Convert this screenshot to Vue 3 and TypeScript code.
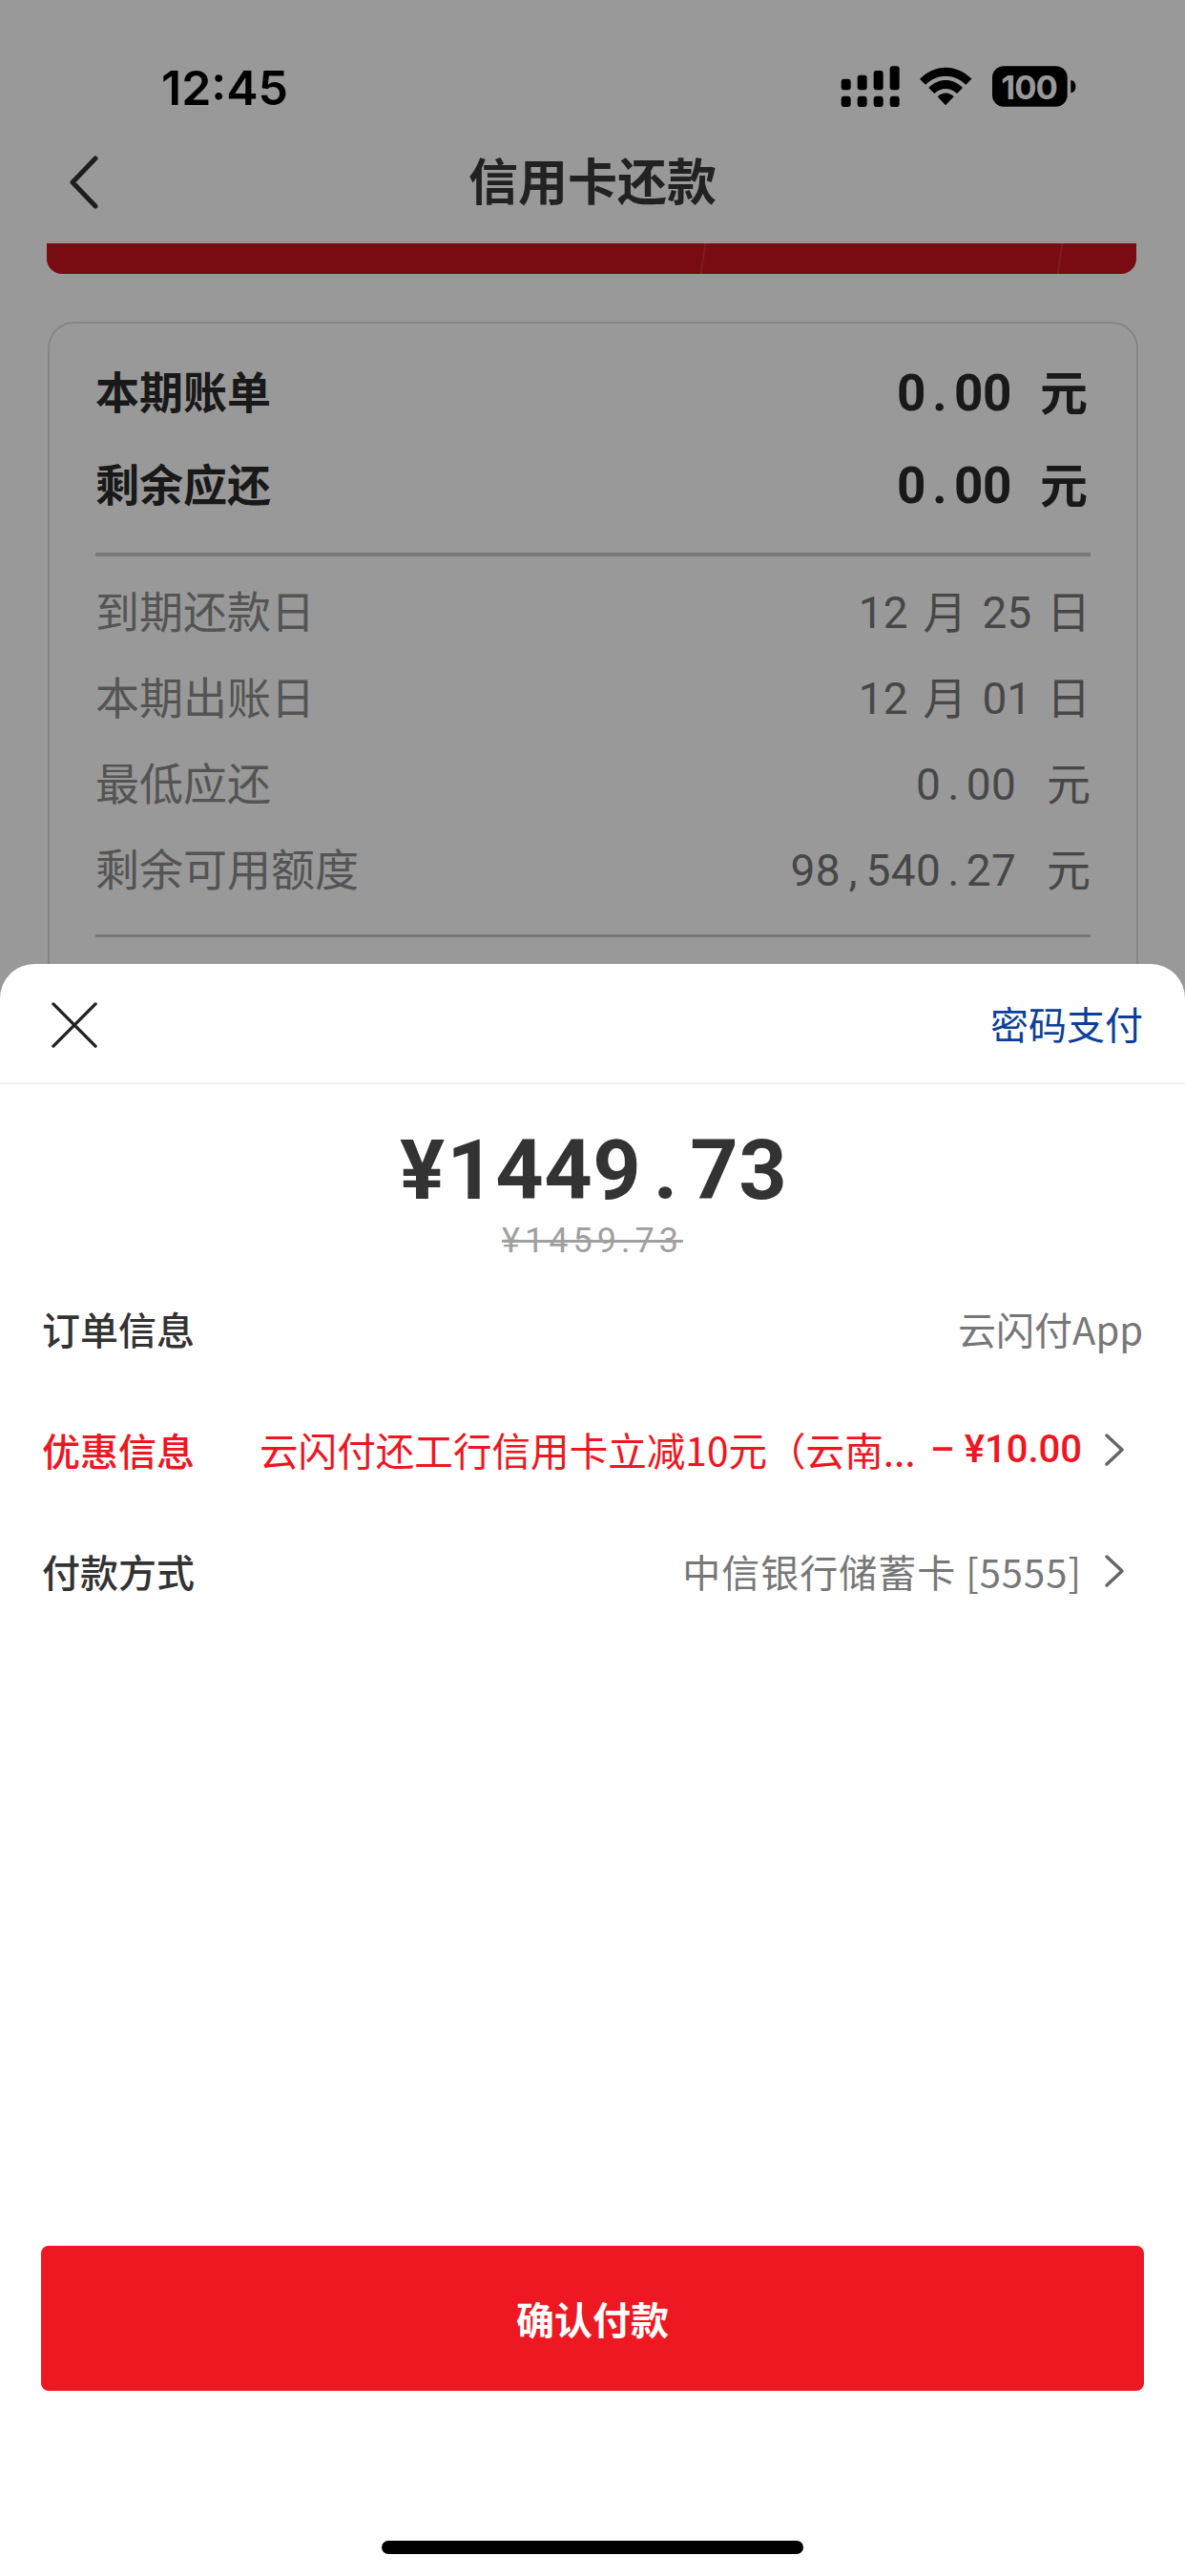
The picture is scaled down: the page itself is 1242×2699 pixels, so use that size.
<script setup lang="ts">
const billRows = [
  { label: '本期账单', num: '0.00', unit: '元' },
  { label: '剩余应还', num: '0.00', unit: '元' }
];

const detailRows = [
  { label: '到期还款日', value: '12 月 25 日', fixed: false },
  { label: '本期出账日', value: '12 月 01 日', fixed: false },
  { label: '最低应还', value: '0.00', unit: '元', fixed: true },
  { label: '剩余可用额度', value: '98,540.27', unit: '元', fixed: true }
];

// the numbers in the reference are monospaced, each char gets its own cell
const chars = (s: string) => s.split('');
</script>

<template>
  <div class="page">
    <div class="status-bar">
      <span class="time">12:45</span>
      <svg class="status-icons" viewBox="0 0 960 270" aria-hidden="true">
        <rect x="125" y="98" width="30" height="35" rx="9" />
        <rect x="176" y="86" width="30" height="47" rx="9" />
        <rect x="227" y="72" width="30" height="61" rx="9" />
        <rect x="278" y="58" width="30" height="75" rx="9" />
        <rect x="125" y="152" width="30" height="34" rx="10" />
        <rect x="176" y="152" width="30" height="34" rx="10" />
        <rect x="227" y="152" width="30" height="34" rx="10" />
        <rect x="278" y="152" width="30" height="34" rx="10" />
        <path d="M372 98C420 50 488 50 535 98L517 116C480 80 427 80 390 116Z" />
        <path d="M400 126C432 94 475 94 507 126L489 144C467 124 440 124 418 144Z" />
        <path d="M428 154C444 139 463 139 479 154L453 181Z" />
        <rect x="600" y="58" width="236" height="127" rx="36" />
        <path d="M847 102C858 104 862 112 862 122C862 132 858 140 847 142Z" />
        <text class="battery-text" x="716" y="162" text-anchor="middle">100</text>
      </svg>
    </div>

    <div class="nav-bar">
      <svg class="back" viewBox="0 0 34 56" aria-hidden="true">
        <path d="M29 3 5 28l24 25" />
      </svg>
      <span class="nav-title">信用卡还款</span>
    </div>

    <div class="red-band">
      <i class="streak streak-a"></i>
      <i class="streak streak-b"></i>
    </div>

    <div class="card">
      <div class="bill-rows">
        <div v-for="row in billRows" :key="row.label" class="bill-row">
          <span>{{ row.label }}</span>
          <span class="bill-value">
            <span class="cells"><span v-for="(c, i) in chars(row.num)" :key="i" class="cell">{{ c }}</span></span>
            <span>{{ row.unit }}</span>
          </span>
        </div>
      </div>
      <div class="divider"></div>
      <div class="detail-rows">
        <div v-for="row in detailRows" :key="row.label" class="detail-row">
          <span>{{ row.label }}</span>
          <span v-if="row.fixed" class="detail-value">
            <span class="cells"><span v-for="(c, i) in chars(row.value)" :key="i" class="cell">{{ c }}</span></span>
            <span>{{ row.unit }}</span>
          </span>
          <span v-else class="detail-value date">{{ row.value }}</span>
        </div>
      </div>
      <div class="divider thin"></div>
    </div>

    <div class="scrim"></div>

    <div class="sheet">
      <div class="sheet-head">
        <svg class="close" viewBox="0 0 50 50" aria-hidden="true">
          <path d="M2 2 48 48M48 2 2 48" />
        </svg>
        <span class="pwd-pay">密码支付</span>
      </div>

      <div class="amount"><span v-for="(c, i) in chars('¥1449.73')" :key="i" class="amount-cell">{{ c }}</span></div>
      <div class="old-amount">¥1459.73</div>

      <div class="info-rows">
        <div class="info-row">
          <span class="info-label">订单信息</span>
          <span class="info-value">云闪付App</span>
        </div>
        <div class="info-row promo">
          <span class="info-label">优惠信息</span>
          <span class="promo-text">云闪付还工行信用卡立减10元（云南...</span>
          <span class="promo-amount">– ¥10.00</span>
          <svg class="chevron" viewBox="0 0 22 36" aria-hidden="true"><path d="M3 3 19 18 3 33" /></svg>
        </div>
        <div class="info-row">
          <span class="info-label">付款方式</span>
          <span class="info-value pay-card">中信银行储蓄卡 [5555]</span>
          <svg class="chevron" viewBox="0 0 22 36" aria-hidden="true"><path d="M3 3 19 18 3 33" /></svg>
        </div>
      </div>

      <button class="confirm" type="button">确认付款</button>
      <div class="home-bar"></div>
    </div>
  </div>
</template>

<style>
html,
body {
  margin: 0;
  background: #fff;
}
</style>

<style scoped>
.page {
  position: relative;
  width: 1242px;
  height: 2699px;
  overflow: hidden;
  background: #fff;
  color: #222;
  font-family: "Noto Sans CJK SC", "Noto Sans", sans-serif;
}

.status-bar {
  height: 135px;
  box-sizing: border-box;
  padding: 0 82px 0 169px;
  display: flex;
  justify-content: space-between;
  align-items: flex-start;
}

.time {
  margin-top: 60px;
  font-family: Inter, sans-serif;
  font-size: 50px;
  line-height: 64px;
  font-weight: 600;
  color: #000;
}

.status-icons {
  margin-top: 50px;
  width: 320px;
  height: 90px;
  fill: #000;
}

.battery-text {
  font-family: Inter, sans-serif;
  font-size: 104px;
  font-weight: 700;
  letter-spacing: -3px;
  fill: #fff;
}

.nav-bar {
  height: 120px;
  position: relative;
  display: flex;
  align-items: center;
  justify-content: center;
}

.back {
  position: absolute;
  left: 71px;
  top: 28px;
  width: 34px;
  height: 56px;
  fill: none;
  stroke: #333;
  stroke-width: 5;
  stroke-linecap: round;
  stroke-linejoin: round;
}

.nav-title {
  font-size: 52px;
  line-height: 72px;
  font-weight: 700;
  color: #3a3a3a;
  margin-top: -14px;
}

.red-band {
  position: relative;
  overflow: hidden;
  margin-left: 49px;
  width: 1142px;
  height: 32px;
  background: #c9151f;
  border-radius: 0 0 16px 16px;
}

.streak {
  position: absolute;
  top: 0;
  width: 2px;
  height: 32px;
  background: rgba(255, 255, 255, 0.12);
  transform: skewX(-8deg);
}

.streak-a {
  left: 687px;
}

.streak-b {
  left: 1061px;
}

.card {
  margin: 50px 0 0 50px;
  width: 1143px;
  box-sizing: border-box;
  height: 900px;
  padding: 20px 48px 0;
  border: 2px solid #dedede;
  border-radius: 28px;
}

.bill-rows {
  display: flex;
  flex-direction: column;
}

.bill-row {
  height: 97px;
  display: flex;
  justify-content: space-between;
  align-items: center;
  font-size: 46px;
  font-weight: 700;
  color: #2a2a2a;
}

.bill-value,
.detail-value {
  display: flex;
  align-items: center;
}

.bill-value {
  gap: 30px;
  margin-right: 3px;
  font-size: 50px;
}

.detail-value {
  gap: 32px;
  color: #777;
}

.cells {
  display: flex;
  margin-top: 8px;
  font-family: Roboto, sans-serif;
}

.cell {
  text-align: center;
}

.bill-value .cell {
  width: 30px;
  font-size: 53px;
  font-weight: 700;
}

.detail-value .cell {
  width: 26.3px;
  font-size: 46px;
  font-weight: 400;
}

.divider {
  height: 4px;
  margin-top: 26px;
  background: #c9c9c9;
}

.divider.thin {
  height: 3px;
  margin-top: 26px;
}

.detail-rows {
  margin-top: 10px;
}

.detail-row {
  height: 90px;
  display: flex;
  justify-content: space-between;
  align-items: center;
  font-size: 46px;
  color: #8c8c8c;
}

.date {
  font-family: Roboto, "Noto Sans CJK SC", sans-serif;
  font-size: 46px;
  word-spacing: 4.5px;
  margin-top: 0;
}

.scrim {
  position: absolute;
  inset: 0;
  background: rgba(0, 0, 0, 0.4);
}

.sheet {
  position: absolute;
  left: 0;
  right: 0;
  bottom: 0;
  height: 1689px;
  background: #fff;
  border-radius: 36px 36px 0 0;
  display: flex;
  flex-direction: column;
}

.sheet-head {
  height: 126px;
  box-sizing: border-box;
  padding: 0 44px 0 54px;
  display: flex;
  justify-content: space-between;
  align-items: center;
  border-bottom: 2px solid #f1f1f1;
}

.close {
  width: 48px;
  height: 48px;
  margin-top: 4px;
  fill: none;
  stroke: #222;
  stroke-width: 3.5;
  stroke-linecap: round;
}

.pwd-pay {
  font-size: 40px;
  line-height: 56px;
  color: #0b3f9b;
}

.amount {
  margin-top: 32px;
  display: flex;
  justify-content: center;
  font-family: Roboto, sans-serif;
  font-size: 88px;
  line-height: 116px;
  font-weight: 700;
  color: #333;
}

.amount-cell {
  width: 51px;
  text-align: center;
}

.old-amount {
  margin-top: -7px;
  text-align: center;
  font-family: Roboto, sans-serif;
  font-size: 36px;
  line-height: 46px;
  letter-spacing: 5px;
  color: #a0a0a0;
  text-decoration: line-through;
}

.info-rows {
  margin-top: 5px;
  padding: 0 44px;
}

.info-row {
  height: 127px;
  display: flex;
  align-items: center;
  font-size: 40px;
}

.info-label {
  color: #333;
  font-weight: 500;
  margin-right: auto;
}

.info-value {
  color: #777;
}

.pay-card {
  letter-spacing: 1px;
}

.promo .info-label {
  color: #f01521;
  margin-right: 68px;
}

.promo-text {
  flex: 1;
  color: #f01521;
  font-size: 40.6px;
  white-space: nowrap;
}

.promo-amount {
  color: #f01521;
  font-family: Roboto, sans-serif;
  font-weight: 500;
}

.chevron {
  width: 22px;
  height: 36px;
  margin: 0 19px 0 23px;
  fill: none;
  stroke: #666;
  stroke-width: 3.5;
  stroke-linecap: round;
  stroke-linejoin: round;
}

.confirm {
  display: block;
  margin: 644px 43px 0;
  height: 152px;
  border: none;
  border-radius: 8px;
  background: #ee1822;
  color: #fff;
  font-family: inherit;
  font-size: 40px;
  font-weight: 700;
}

.home-bar {
  margin: 157px auto 0;
  width: 442px;
  height: 14px;
  border-radius: 7px;
  background: #000;
}
</style>
